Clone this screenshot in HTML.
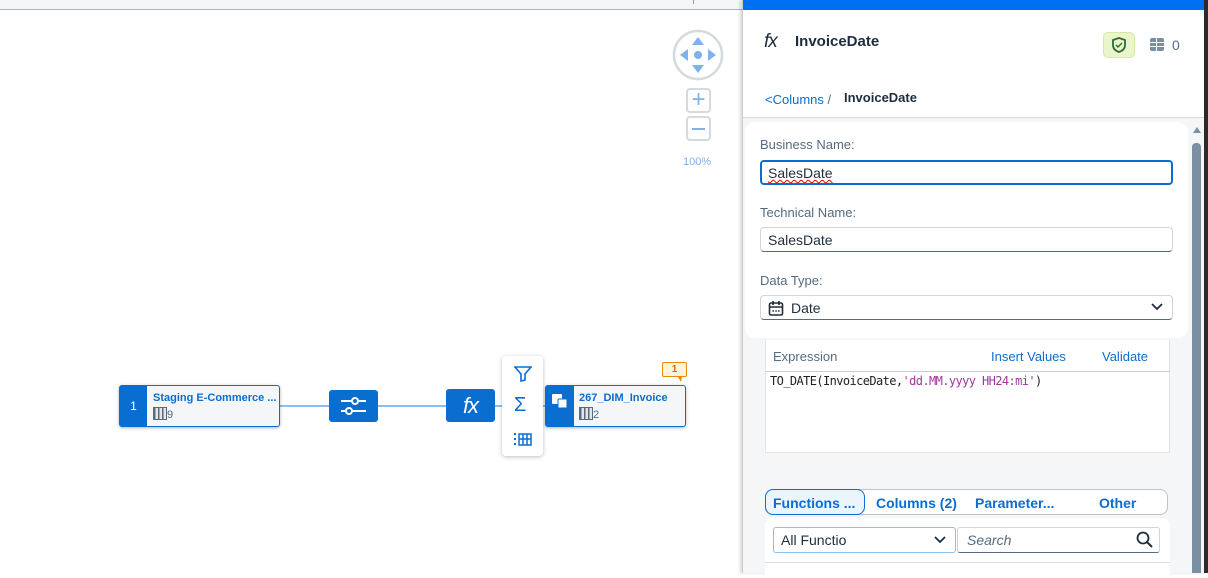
<!DOCTYPE html>
<html><head><meta charset="utf-8"><style>
*{box-sizing:border-box;margin:0;padding:0}
body{width:1208px;height:573px;overflow:hidden;position:relative;font-family:"Liberation Sans",sans-serif;background:#fff}
.a{position:absolute}
.node{position:absolute;background:#f5f6f7;border:1px solid #0a6ed1;border-radius:3px;box-shadow:0 1px 3px rgba(0,0,0,.3)}
.blue{background:#0a6ed1}
.lbl{font-size:13px;color:#556b82}
.inp{position:absolute;left:760px;width:413px;height:25px;background:#fff;border:1px solid #d0d5da;border-bottom:1px solid #556b82;border-radius:4px;font-size:14px;color:#1d2d3e;padding:4px 7px}
.tab{position:absolute;top:495px;font-size:14px;font-weight:bold;color:#0a6ed1}
.fx{font-family:"Liberation Sans",sans-serif;font-style:italic;letter-spacing:-1px}
.cols{display:inline-block;width:14px;height:13px;border:1.5px solid #556b82;background:repeating-linear-gradient(90deg,#556b82 0 1.5px,#e5e5e5 1.5px 4px);vertical-align:-2px}
</style></head><body>
<div class="a" style="left:0;top:0;width:743px;height:10px;background:#f5f6f7;border-bottom:1px solid #a9b4be"></div>
<div class="a" style="left:693px;top:0;width:1px;height:4px;background:#999"></div>
<svg class="a" style="left:672px;top:29px" width="52" height="52" viewBox="0 0 52 52"><circle cx="26" cy="26" r="24" fill="#fff" stroke="#d5dadd" stroke-width="2.5"/><path d="M26 8l6 8h-12z M26 44l6-8h-12z M8 26l8-6v12z M44 26l-8-6v12z" fill="#7fb1ec"/><circle cx="26" cy="26" r="4" fill="#7fb1ec"/></svg>
<div class="a" style="left:686px;top:88px;width:25px;height:25px;border:2px solid #d5dadd;border-radius:4px;color:#7fb1ec;font-size:24px;line-height:19px;text-align:center">+</div>
<div class="a" style="left:686px;top:116px;width:25px;height:25px;border:2px solid #d5dadd;border-radius:4px"><div class="a" style="left:4px;top:10px;width:13px;height:2px;background:#7fb1ec"></div></div>
<div class="a" style="left:683px;top:156px;font-size:11px;color:#7fb1ec">100%</div>
<div class="a" style="left:280px;top:405px;width:170px;height:2px;background:#8cbdf0"></div>
<div class="a" style="left:495px;top:405px;width:52px;height:2px;background:#8cbdf0"></div>
<div class="node" style="left:119px;top:385px;width:161px;height:42px"><div class="a blue" style="left:0;top:0;width:27px;height:40px;color:#fff;font-size:12px;text-align:center;line-height:40px">1</div>
<div class="a" style="left:33px;top:6px;font-size:11px;font-weight:bold;color:#0a6ed1">Staging E-Commerce ...</div>
<div class="a" style="left:33px;top:21px;font-size:11px;color:#556b82"><span class="cols"></span>9</div></div>
<div class="a blue" style="left:329px;top:390px;width:49px;height:32px;border-radius:3px"><svg width="49" height="32"><g stroke="#fff" stroke-width="2" fill="none"><path d="M12 11h11M29 11h8M12 21h5M23 21h14"/><circle cx="26" cy="11" r="3"/><circle cx="20" cy="21" r="3"/></g></svg></div>
<div class="a blue fx" style="left:446px;top:389px;width:49px;height:33px;border-radius:3px;color:#fff;font-size:22px;text-align:center;line-height:33px">fx</div>
<div class="a" style="left:502px;top:356px;width:41px;height:100px;background:#fff;border-radius:4px;box-shadow:0 1px 4px rgba(0,0,0,.25)">
<svg class="a" style="left:12px;top:10px" width="18" height="16"><path d="M1 1h16l-6 7v6l-4 1V8z" fill="none" stroke="#0a6ed1" stroke-width="1.6"/></svg>
<div class="a" style="left:12px;top:38px;font-size:20px;color:#0a6ed1">Σ</div>
<svg class="a" style="left:12px;top:74px" width="18" height="16"><g fill="#0a6ed1"><rect x="0" y="3" width="2" height="2"/><rect x="0" y="8" width="2" height="2"/><rect x="0" y="13" width="2" height="2"/></g><path d="M5 4h12v11H5zM5 9h12M9 4v11M13 4v11" stroke="#0a6ed1" stroke-width="1.5" fill="none"/></svg></div>
<div class="node" style="left:545px;top:385px;width:141px;height:42px"><div class="a blue" style="left:0;top:0;width:28px;height:40px"><svg width="28" height="40"><g fill="#fff"><rect x="6" y="8" width="10" height="10" rx="1"/><rect x="12" y="13" width="9" height="9" rx="1" stroke="#0a6ed1"/></g></svg></div>
<div class="a" style="left:33px;top:6px;font-size:11px;font-weight:bold;color:#0a6ed1">267_DIM_Invoice</div>
<div class="a" style="left:33px;top:21px;font-size:11px;color:#556b82"><span class="cols"></span>2</div></div>
<div class="a" style="left:662px;top:362px;width:25px;height:15px;background:#fff3d8;border:1px solid #e78c07;border-radius:2px;font-size:10px;color:#e76500;text-align:center;line-height:13px;font-weight:bold">1</div>
<div class="a" style="left:678px;top:377px;width:0;height:0;border-left:3px solid transparent;border-right:1px solid transparent;border-top:5px solid #e78c07"></div>
<div class="a" style="left:742px;top:0;width:466px;height:573px;background:#f5f6f7;border-left:1px solid #ccc;box-shadow:-2px 0 3px rgba(0,0,0,.15)"></div>
<div class="a" style="left:743px;top:0;width:461px;height:10px;background:#0070f2"></div>
<div class="a" style="left:1204px;top:0;width:4px;height:573px;background:#2b2b2b"></div>
<div class="a" style="left:743px;top:10px;width:461px;height:108px;background:#fff;border-bottom:1px solid #d9d9d9"></div>
<div class="a fx" style="left:764px;top:31px;font-size:19px;color:#1d2d3e">fx</div>
<div class="a" style="left:795px;top:33px;font-size:15px;font-weight:bold;color:#1d2d3e">InvoiceDate</div>
<div class="a" style="left:1103px;top:32px;width:32px;height:26px;background:#ebf5cb;border:1px solid #d6e9a0;border-radius:5px"><svg width="30" height="24"><path d="M15 5l6 2v5c0 4-3 6-6 7-3-1-6-3-6-7V7z" fill="none" stroke="#256f3a" stroke-width="1.8"/><path d="M12 12l2 2 4-4" stroke="#256f3a" stroke-width="1.4" fill="none"/></svg></div>
<div class="a" style="left:1150px;top:38px;width:14px;height:13px;border-radius:2px;background:#7b8fa3"><div class="a" style="left:6px;top:0;width:1px;height:13px;background:#fff"></div><div class="a" style="left:0;top:4px;width:14px;height:1px;background:#fff"></div><div class="a" style="left:0;top:8px;width:14px;height:1px;background:#fff"></div></div>
<div class="a" style="left:1172px;top:37px;font-size:14px;color:#556b82">0</div>
<div class="a" style="left:765px;top:92px;font-size:13px;color:#0a6ed1">&lt;Columns <span style="color:#556b82">/</span></div>
<div class="a" style="left:844px;top:90px;font-size:13px;font-weight:bold;color:#1d2d3e">InvoiceDate</div>
<div class="a" style="left:745px;top:122px;width:443px;height:216px;background:#fff;border-radius:10px"></div>
<div class="a" style="left:1193px;top:127px;width:0;height:0;border-left:4px solid transparent;border-right:4px solid transparent;border-bottom:6px solid #7b8fa3"></div>
<div class="a" style="left:1192px;top:143px;width:9px;height:430px;background:#7b8fa3;border-radius:4px 4px 0 0"></div>
<div class="a lbl" style="left:760px;top:137px">Business Name:</div>
<div class="inp" style="top:160px;height:25px;border:2px solid #0a6ed1;padding:3px 6px"><span style="text-decoration:underline wavy #e00;text-decoration-thickness:1px">SalesDate</span></div>
<div class="a lbl" style="left:760px;top:205px">Technical Name:</div>
<div class="inp" style="top:227px">SalesDate</div>
<div class="a lbl" style="left:760px;top:273px">Data Type:</div>
<div class="inp" style="top:295px;padding-left:30px">Date</div>
<svg class="a" style="left:768px;top:300px" width="16" height="16"><rect x="1.5" y="3" width="13" height="12" rx="1.5" fill="none" stroke="#1d2d3e" stroke-width="1.6"/><path d="M1.5 7h13M5 1v4M11 1v4" stroke="#1d2d3e" stroke-width="1.6"/><path d="M4.5 11h1.5M7.3 11h1.5M10 11h1.5" stroke="#1d2d3e" stroke-width="1.5"/></svg>
<svg class="a" style="left:1151px;top:303px" width="12" height="8"><path d="M1 1l5 5 5-5" fill="none" stroke="#1d2d3e" stroke-width="1.8"/></svg>
<div class="a" style="left:765px;top:340px;width:405px;height:113px;background:#fff;border:1px solid #e5e5e5;border-top:none"></div>
<div class="a" style="left:765px;top:371px;width:405px;height:1px;background:#ccc"></div>
<div class="a lbl" style="left:773px;top:349px">Expression</div>
<div class="a" style="left:991px;top:349px;font-size:13px;color:#0a6ed1">Insert Values</div>
<div class="a" style="left:1102px;top:349px;font-size:13px;color:#0a6ed1">Validate</div>
<div class="a" style="left:770px;top:374px;font-size:12px;font-family:'DejaVu Sans Mono',monospace;color:#222;letter-spacing:-0.6px">TO_DATE(InvoiceDate,<span style="color:#a2379a">'dd.MM.yyyy HH24:mi'</span>)</div>
<div class="a" style="left:765px;top:489px;width:403px;height:26px;border:1px solid #bcc3ca;border-radius:8px;background:#fff"></div>
<div class="a" style="left:765px;top:489px;width:100px;height:26px;border:1px solid #0a6ed1;border-radius:8px;background:#ebf5fe"></div>
<div class="tab" style="left:773px">Functions ...</div>
<div class="tab" style="left:876px">Columns (2)</div>
<div class="tab" style="left:975px">Parameter...</div>
<div class="tab" style="left:1099px">Other</div>
<div class="a" style="left:765px;top:518px;width:405px;height:60px;background:#fff;border-radius:8px 8px 0 0"></div>
<div class="a" style="left:765px;top:562px;width:405px;height:1px;background:#ddd"></div>
<div class="a" style="left:773px;top:527px;width:183px;height:26px;border:1px solid #89bff5;border-radius:3px;font-size:14px;color:#1d2d3e;padding:4px 7px">All Functio</div>
<svg class="a" style="left:934px;top:536px" width="12" height="8"><path d="M1 1l5 5 5-5" fill="none" stroke="#1d2d3e" stroke-width="1.8"/></svg>
<div class="a" style="left:957px;top:527px;width:203px;height:26px;border:1px solid #d0d5da;border-bottom:1px solid #556b82;border-radius:3px;font-size:14px;font-style:italic;color:#556b82;padding:4px 9px">Search</div>
<svg class="a" style="left:1136px;top:531px" width="17" height="17"><circle cx="7" cy="7" r="5.5" fill="none" stroke="#1d2d3e" stroke-width="1.8"/><path d="M11 11l5 5" stroke="#1d2d3e" stroke-width="2"/></svg>
</body></html>
